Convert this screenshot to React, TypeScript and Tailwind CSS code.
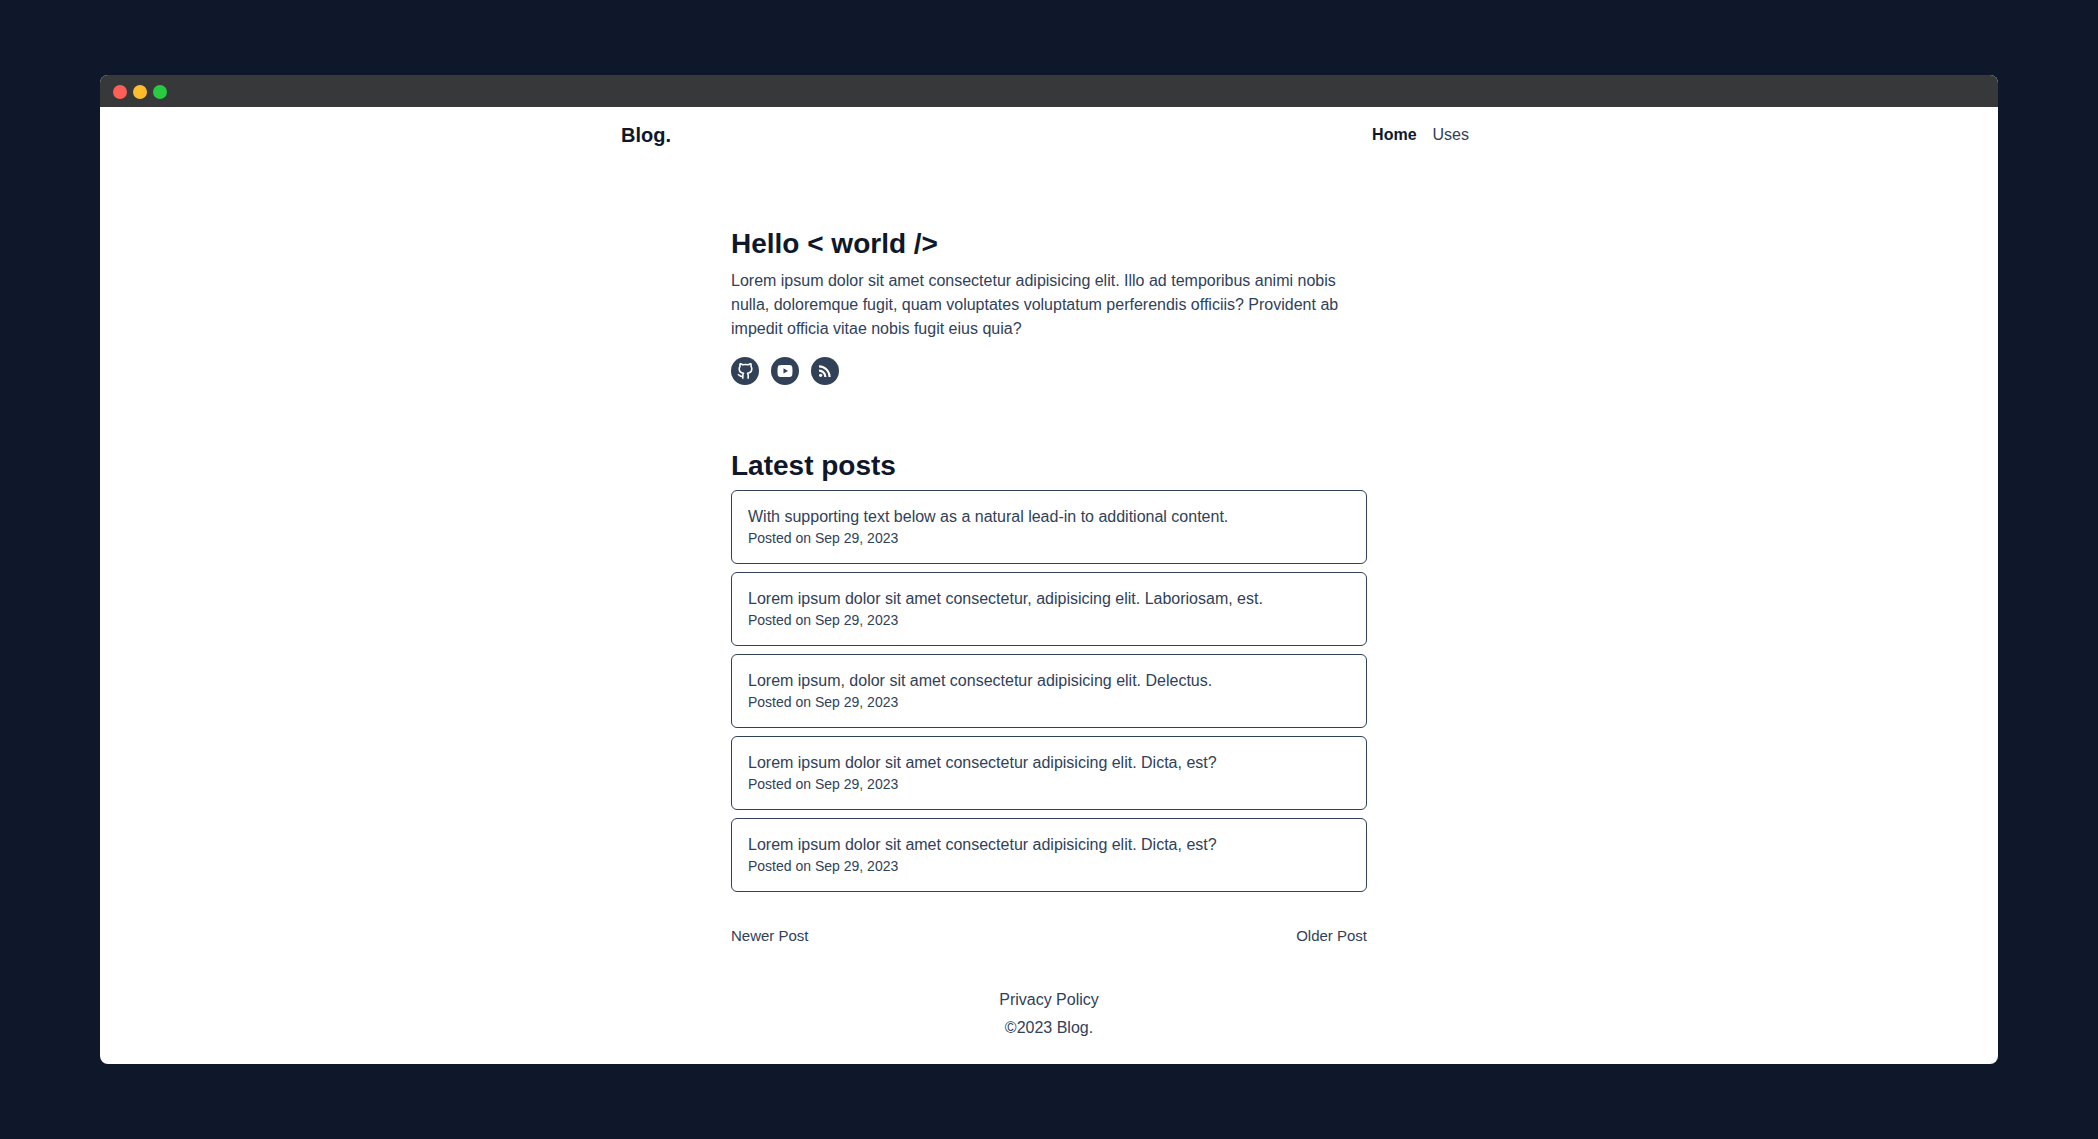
import { RiYoutubeFill } from 'react-icons/ri';
import { MdRssFeed } from 'react-icons/md';

const posts = [
  'With supporting text below as a natural lead-in to additional content.',
  'Lorem ipsum dolor sit amet consectetur, adipisicing elit. Laboriosam, est.',
  'Lorem ipsum, dolor sit amet consectetur adipisicing elit. Delectus.',
  'Lorem ipsum dolor sit amet consectetur adipisicing elit. Dicta, est?',
  'Lorem ipsum dolor sit amet consectetur adipisicing elit. Dicta, est?',
];

function GithubIcon() {
  return (
    <svg viewBox="0 0 16 16" fill="none" stroke="currentColor" strokeWidth="1.6" strokeLinejoin="round" className="size-4">
      <path d="M11.2 15.8v-3.3c0-.9-.2-1.6-.7-2.2 2.6-.3 4.3-1.7 4.3-4.5 0-1-.3-1.900-.9-2.600.3-.8.3-1.700 0-2.400-.9 0-1.900.4-2.600 1-1.900-.4-3.800-.4-5.600 0C5 1.200 4 .8 3.100.8c-.3.7-.3 1.600 0 2.400-.6.7-.9 1.600-.9 2.600 0 2.800 1.700 4.200 4.300 4.500-.5.6-.7 1.300-.7 2.200v3.300" />
      <path d="M5.800 13.400C2.900 14 3.100 11.800.8 11.500" />
    </svg>
  );
}

const socials = [
  { name: 'GitHub', icon: <GithubIcon /> },
  { name: 'YouTube', icon: <RiYoutubeFill className="size-[18px]" /> },
  { name: 'RSS', icon: <MdRssFeed className="size-[18px]" /> },
];

export default function App() {
  return (
    <div className="min-h-screen bg-[#0f172a] px-[100px] py-[75px] font-['Liberation_Sans',Arial,sans-serif] text-base text-slate-700">
      <div className="overflow-hidden rounded-lg bg-white">
        <div className="flex h-8 items-center gap-1.5 bg-[#373839] px-[13px] pt-0.5">
          <span className="size-3.5 rounded-full bg-[#ff5f57]" />
          <span className="size-3.5 rounded-full bg-[#ffbd2e]" />
          <span className="size-3.5 rounded-full bg-[#28ca41]" />
        </div>
        <header className="mx-auto flex max-w-[856px] items-center justify-between py-3">
          <a href="#" className="text-xl leading-8 font-bold text-slate-900">Blog.</a>
          <nav className="flex gap-4 pr-2">
            <a href="#" className="font-bold text-slate-900">Home</a>
            <a href="#">Uses</a>
          </nav>
        </header>
        <main className="mx-auto max-w-[636px]">
          <section className="pt-16">
            <h1 className="mb-2 text-[28px] leading-[34px] font-bold text-slate-900">{'Hello < world />'}</h1>
            <p>
              Lorem ipsum dolor sit amet consectetur adipisicing elit. Illo ad temporibus animi nobis nulla,
              doloremque fugit, quam voluptates voluptatum perferendis officiis? Provident ab impedit officia
              vitae nobis fugit eius quia?
            </p>
            <div className="mt-4 flex gap-3">
              {socials.map(({ name, icon }) => (
                <a key={name} href="#" aria-label={name} className="flex size-7 items-center justify-center rounded-full bg-slate-700 text-white">
                  {icon}
                </a>
              ))}
            </div>
          </section>
          <section className="pt-16">
            <h2 className="mb-[7px] text-[28px] leading-[34px] font-bold text-slate-900">Latest posts</h2>
            <div className="flex flex-col gap-2">
              {posts.map((title, i) => (
                <a key={i} href="#" className="block rounded-md border border-slate-700 px-4 pt-4 pb-3.5">
                  <p className="leading-5">{title}</p>
                  <p className="text-sm leading-[22px]">Posted on Sep 29, 2023</p>
                </a>
              ))}
            </div>
          </section>
          <nav className="flex justify-between pt-8 text-[15px] leading-6">
            <a href="#">Newer Post</a>
            <a href="#">Older Post</a>
          </nav>
        </main>
        <footer className="flex flex-col items-center pt-[38px] pb-[22px] leading-7">
          <a href="#">Privacy Policy</a>
          <p>©2023 Blog.</p>
        </footer>
      </div>
    </div>
  );
}
